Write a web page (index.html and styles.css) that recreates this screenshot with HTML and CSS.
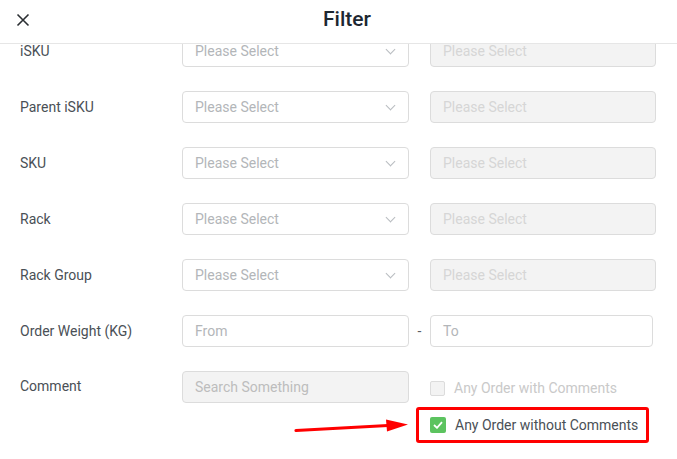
FILE: index.html
```html
<!DOCTYPE html>
<html>

<head>
    <link rel="stylesheet" href="styles.css">
</head>

<body>
    <main class="filter">
        <header class="filterheader">
            <button class="close" type="button">
                <svg width="14" height="14" viewBox="0 0 14 14">
                    <path d="M1.5 1.5 L12.5 12.5 M12.5 1.5 L1.5 12.5" stroke="#2b2f33" stroke-width="1.6" fill="none" />
                </svg>
            </button>
            <h1 class="title">Filter</h1>
        </header>
        <section class="filterbody">
            <div class="form">
                <!-- select rows -->
                <div class="row">
                    <label class="label">iSKU</label>
                    <div class="select">Please Select<span class="chevron"></span></div>
                    <div class="gap"></div>
                    <div class="select disabled">Please Select</div>
                </div>
                <div class="row">
                    <label class="label">Parent iSKU</label>
                    <div class="select">Please Select<span class="chevron"></span></div>
                    <div class="gap"></div>
                    <div class="select disabled">Please Select</div>
                </div>
                <div class="row">
                    <label class="label">SKU</label>
                    <div class="select">Please Select<span class="chevron"></span></div>
                    <div class="gap"></div>
                    <div class="select disabled">Please Select</div>
                </div>
                <div class="row">
                    <label class="label">Rack</label>
                    <div class="select">Please Select<span class="chevron"></span></div>
                    <div class="gap"></div>
                    <div class="select disabled">Please Select</div>
                </div>
                <div class="row">
                    <label class="label">Rack Group</label>
                    <div class="select">Please Select<span class="chevron"></span></div>
                    <div class="gap"></div>
                    <div class="select disabled">Please Select</div>
                </div>
                <!-- weight range -->
                <div class="row">
                    <label class="label">Order Weight (KG)</label>
                    <div class="select">From</div>
                    <div class="gap">-</div>
                    <div class="select short">To</div>
                </div>
                <!-- comment -->
                <div class="row top">
                    <label class="label">Comment</label>
                    <div class="select disabled dark">Search Something</div>
                    <div class="gap"></div>
                    <div class="checks">
                        <div class="check off">
                            <span class="box"></span>Any Order with Comments
                        </div>
                        <div class="check on highlight">
                            <span class="box">
                                <svg width="10" height="8" viewBox="0 0 10 8">
                                    <path d="M1 4 L4 6.8 L9 1.2" stroke="#fff" stroke-width="1.8" fill="none" />
                                </svg>
                            </span>Any Order without Comments
                        </div>
                    </div>
                </div>
            </div>
            <svg class="arrow" width="120" height="20" viewBox="0 0 120 20">
                <path d="M2 14.5 L94 9.5" stroke="#f00" stroke-width="3.2" fill="none" stroke-linecap="round" />
                <path d="M92 3.5 L114 8.5 L93 15.5 Z" fill="#f00" />
            </svg>
        </section>
    </main>
</body>

</html>
```

FILE: styles.css
```css
* {
    margin: 0;
    padding: 0;
    box-sizing: border-box;
    font-family: Roboto, "Liberation Sans", sans-serif;
}

body {
    width: 677px;
    height: 459px;
    background-color: #fff;
    overflow: hidden;
}

main.filter {
    position: relative;
    height: 100%;
    display: flex;
    flex-direction: column;
}

.filterheader {
    position: relative;
    z-index: 2;
    height: 44px;
    flex-shrink: 0;
    padding-left: 17px;
    background-color: #fff;
    border-bottom: 1px solid #e6e6e6;
    display: flex;
    align-items: center;
    justify-content: center;
}

.close {
    position: absolute;
    left: 16px;
    top: 13px;
    width: 14px;
    height: 14px;
    border: none;
    background: none;
    display: flex;
}

.title {
    font-size: 21px;
    font-weight: 500;
    color: #1d2731;
    margin-top: -6px;
}

.filterbody {
    position: relative;
    flex: 1;
}

.form {
    /* list is scrolled a little, first row sits under the header */
    margin-top: -9px;
    padding: 0 20px;
    display: flex;
    flex-direction: column;
    gap: 24px;
}

.row {
    display: flex;
    align-items: center;
    height: 32px;
}

.row.top {
    align-items: flex-start;
    height: auto;
}

.label {
    width: 162px;
    font-size: 14px;
    color: #4a5056;
}

.row.top .label {
    line-height: 30px;
}

.select {
    position: relative;
    width: 227px;
    height: 32px;
    border: 1px solid #dcdcdc;
    border-radius: 4px;
    padding: 0 12px;
    font-size: 14px;
    line-height: 30px;
    color: #b3b6b9;
}

.select.disabled {
    width: 226px;
    background-color: #f3f3f3;
    color: #d6d6d6;
}

.select.disabled.dark {
    width: 227px;
    color: #bdbdbd;
}

.select.short {
    width: 223px;
}

.chevron {
    position: absolute;
    right: 14px;
    top: 10px;
    width: 7px;
    height: 7px;
    border-right: 1px solid #b8bcc0;
    border-bottom: 1px solid #b8bcc0;
    transform: rotate(45deg);
}

.gap {
    width: 21px;
    text-align: center;
    font-size: 14px;
    color: #5a5f64;
}

.checks {
    display: flex;
    flex-direction: column;
    padding-top: 9px;
    gap: 11px;
}

.check {
    display: flex;
    align-items: center;
    font-size: 14px;
    color: #4a5056;
}

.check .box {
    width: 15px;
    height: 15px;
    border-radius: 2px;
    margin-right: 9px;
    display: flex;
    align-items: center;
    justify-content: center;
}

.check.off {
    color: #c9c9c9;
}

.check.off .box {
    border: 1px solid #dcdcdc;
    background-color: #f3f3f3;
}

.check.on .box {
    background-color: #5cc35f;
    width: 16px;
    height: 16px;
}

.check.highlight {
    margin-left: -14px;
    width: 233px;
    height: 36px;
    padding-left: 11px;
    border: 3px solid #f00;
    border-radius: 3px;
}

.arrow {
    position: absolute;
    left: 294px;
    top: 372px;
}
```
